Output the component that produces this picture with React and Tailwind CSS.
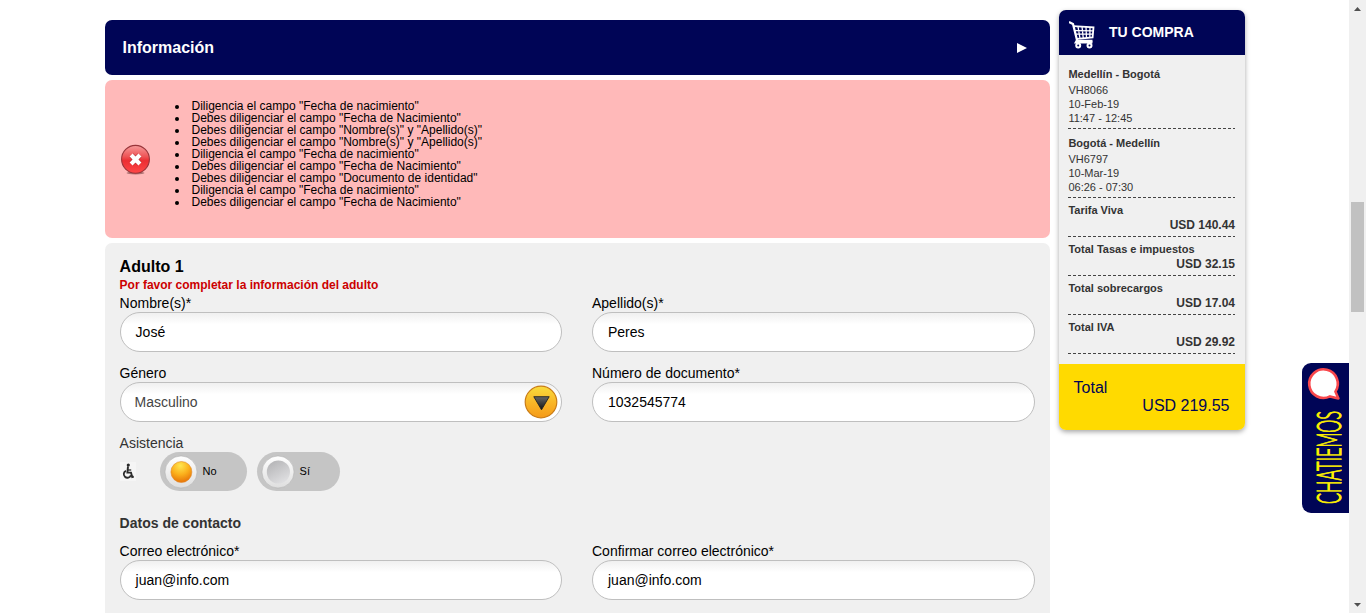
import React from "react";

const errors = [
  'Diligencia el campo "Fecha de nacimiento"',
  'Debes diligenciar el campo "Fecha de Nacimiento"',
  'Debes diligenciar el campo "Nombre(s)" y "Apellido(s)"',
  'Debes diligenciar el campo "Nombre(s)" y "Apellido(s)"',
  'Diligencia el campo "Fecha de nacimiento"',
  'Debes diligenciar el campo "Fecha de Nacimiento"',
  'Debes diligenciar el campo "Documento de identidad"',
  'Diligencia el campo "Fecha de nacimiento"',
  'Debes diligenciar el campo "Fecha de Nacimiento"',
];

const flights = [
  { route: "Medellín - Bogotá", code: "VH8066", date: "10-Feb-19", time: "11:47 - 12:45" },
  { route: "Bogotá - Medellín", code: "VH6797", date: "10-Mar-19", time: "06:26 - 07:30" },
];

const charges = [
  { label: "Tarifa Viva", value: "USD 140.44" },
  { label: "Total Tasas e impuestos", value: "USD 32.15" },
  { label: "Total sobrecargos", value: "USD 17.04" },
  { label: "Total IVA", value: "USD 29.92" },
];

function ErrorIcon() {
  return (
    <svg width="32" height="32" viewBox="0 0 32 32" className="mt-[2px] shrink-0">
      <defs>
        <linearGradient id="err" x1="0" y1="0" x2="0" y2="1">
          <stop offset="0" stopColor="#f79a9a" />
          <stop offset="0.4" stopColor="#ee5557" />
          <stop offset="0.55" stopColor="#ec2e32" />
          <stop offset="1" stopColor="#ff4848" />
        </linearGradient>
      </defs>
      <ellipse cx="16.5" cy="29" rx="9" ry="1.5" fill="#8a5555" opacity="0.7" />
      <circle cx="16.5" cy="15.3" r="13.9" fill="url(#err)" stroke="#98353a" strokeWidth="1.1" />
      <path d="M12.4 11.4l8.2 8.2M20.6 11.4l-8.2 8.2" stroke="#b02a2e" strokeWidth="5.2" />
      <path d="M12.1 11.1l8.8 8.8M20.9 11.1l-8.8 8.8" stroke="#fff" strokeWidth="4.2" />
    </svg>
  );
}

function CartIcon() {
  return (
    <svg width="26" height="28" viewBox="0 0 26 28" fill="none" stroke="#fff" className="shrink-0">
      <path d="M0 1L4 3L8.2 19.8H23.5" strokeWidth="2.2" />
      <path d="M4.5 5.2L24.5 6.3L23.6 16.5L8 17.8" strokeWidth="1.8" />
      <path d="M5.5 9.6L24.5 9.8M6.5 13.2L24 13.2M9 5.5L11 17.5M13 5.5L14.3 17.5M17 6L17.5 17M21 6L20.8 17" strokeWidth="1.3" />
      <path d="M8.2 18.5L6.5 21.5H23.5" strokeWidth="1.8" />
      <circle cx="9.2" cy="24.5" r="2" strokeWidth="2" />
      <circle cx="20.5" cy="24.5" r="2" strokeWidth="2" />
    </svg>
  );
}

function WheelchairIcon() {
  return (
    <svg width="16" height="19" viewBox="0 0 16 19" fill="none" stroke="#2a2a2a" className="shrink-0 bg-[#f5f5f5]">
      <circle cx="8.3" cy="3" r="1.6" fill="#2a2a2a" stroke="none" />
      <path d="M8 4.4L7.4 10.6H11L12.2 15L13.8 14.6" strokeWidth="1.9" />
      <path d="M7.6 8H11.2" strokeWidth="1.3" />
      <path d="M6 8.8A3.6 3.6 0 1 0 10.8 13.2" strokeWidth="1.8" />
    </svg>
  );
}

function DropIcon() {
  return (
    <svg width="34" height="34" viewBox="0 0 34 34" className="shrink-0">
      <defs>
        <linearGradient id="drop" x1="0" y1="0" x2="0" y2="1">
          <stop offset="0" stopColor="#f9dc3c" />
          <stop offset="0.5" stopColor="#f9b728" />
          <stop offset="1" stopColor="#f59a18" />
        </linearGradient>
        <linearGradient id="tri" x1="0" y1="0" x2="0" y2="1">
          <stop offset="0" stopColor="#666" />
          <stop offset="1" stopColor="#111" />
        </linearGradient>
      </defs>
      <circle cx="17" cy="17" r="15.8" fill="url(#drop)" stroke="#c97c17" strokeWidth="1.2" />
      <path d="M9.8 11.7H25.2L17.5 24.8Z" fill="url(#tri)" stroke="#222" strokeWidth="0.9" />
    </svg>
  );
}

function Knob({ on }) {
  return (
    <svg width="34" height="34" viewBox="0 0 34 34" className="shrink-0">
      <defs>
        <radialGradient id="amber" cx="0.45" cy="0.2" r="0.85">
          <stop offset="0" stopColor="#ffe650" />
          <stop offset="0.5" stopColor="#fbb01c" />
          <stop offset="1" stopColor="#e46b05" />
        </radialGradient>
        <linearGradient id="grey" x1="0.2" y1="0" x2="0.8" y2="1">
          <stop offset="0" stopColor="#b4b4b6" />
          <stop offset="1" stopColor="#e2e2e4" />
        </linearGradient>
        <linearGradient id="ring" x1="0" y1="0" x2="0" y2="1">
          <stop offset="0" stopColor="#ffffff" />
          <stop offset="1" stopColor="#dedede" />
        </linearGradient>
      </defs>
      <circle cx="17" cy="17" r="16.1" fill="url(#ring)" stroke="#b5b5b5" strokeWidth="0.7" />
      {on ? (
        <circle cx="17.4" cy="17" r="10.5" fill="url(#amber)" stroke="#e08a28" strokeWidth="0.6" />
      ) : (
        <circle cx="17.4" cy="17" r="11.6" fill="url(#grey)" />
      )}
    </svg>
  );
}

function Field({ label, value }) {
  return (
    <div>
      <div className="h-[18px] text-[14px] leading-[18px] text-black">{label}</div>
      <div className="flex h-10 items-center rounded-[20px] border border-[#bfbfbf] bg-linear-to-b from-[#f0f0f0] via-white via-30% to-white px-[15px] text-[14px] text-black">
        {value}
      </div>
    </div>
  );
}

function Arrow({ down }) {
  return (
    <svg width="17" height="17" viewBox="0 0 17 17">
      <path d={down ? "M5 7H12L8.5 10.8Z" : "M5 11H12L8.5 7Z"} fill="#505050" />
    </svg>
  );
}

function Dashes() {
  return (
    <svg width="167" height="1" className="mt-[3px] block">
      <path d="M0 0.5H167" stroke="#444" strokeWidth="1" strokeDasharray="3 2" />
    </svg>
  );
}

export default function App() {
  return (
    <div className="relative flex h-[613px] w-[1366px] overflow-hidden bg-white font-['Liberation_Sans',Arial,sans-serif]">
      <div className="flex flex-1 items-start pl-[105px]">
        <main className="w-[945px] pt-5">
          <header className="flex h-[55px] items-center justify-between rounded-[7px] bg-[#000556] pr-[23px] pl-[17.5px]">
            <h1 className="text-[16px] font-bold text-white">Información</h1>
            <svg width="10" height="10" viewBox="0 0 10 10">
              <path d="M0 0L10 5L0 10Z" fill="#fff" />
            </svg>
          </header>

          <section className="mt-[5px] flex h-[158px] items-center rounded-[7px] bg-[#ffb9b9] pl-[14px]">
            <ErrorIcon />
            <ul className="-mt-[11px] ml-6 text-[12px] leading-[12px] text-black">
              {errors.map((e, i) => (
                <li key={i} className="flex h-3 items-center">
                  <span className="mt-[3px] mr-[12.5px] size-1 rounded-full bg-black" />
                  {e}
                </li>
              ))}
            </ul>
          </section>

          <section className="mt-[5px] h-[380px] rounded-t-[7px] bg-[#f0f0f0] pt-[14px] pr-[15px] pl-[14.6px]">
            <h2 className="h-[19px] text-[16px] leading-5 font-bold text-black">Adulto 1</h2>
            <p className="h-[18px] text-[12px] leading-[18px] font-bold text-[#c00]">
              Por favor completar la información del adulto
            </p>
            <div className="grid grid-cols-[442px_443px] justify-between">
              <Field label="Nombre(s)*" value="José" />
              <Field label="Apellido(s)*" value="Peres" />
            </div>
            <div className="mt-3 grid grid-cols-[442px_443px] justify-between">
              <div>
                <div className="h-[18px] text-[14px] leading-[18px] text-black">Género</div>
                <div className="flex h-10 items-center justify-between rounded-[20px] border border-[#bfbfbf] bg-linear-to-b from-[#f0f0f0] via-white via-30% to-white pr-[2.4px] pl-[14px] text-[14px] text-[#444]">
                  Masculino
                  <DropIcon />
                </div>
              </div>
              <Field label="Número de documento*" value="1032545774" />
            </div>
            <div className="mt-3 h-[18px] text-[14px] leading-[18px] text-[#333]">Asistencia</div>
            <div className="flex h-[39px] items-center">
              <WheelchairIcon />
              <div className="ml-[24.4px] flex h-[39px] w-[87px] items-center gap-[4.6px] rounded-full bg-[#c5c5c5] pl-1 text-[11px] text-black">
                <Knob on />
                No
              </div>
              <div className="ml-[10px] flex h-[39px] w-[83px] items-center gap-[4.6px] rounded-full bg-[#c5c5c5] pl-1 text-[11px] text-black">
                <Knob />
                Sí
              </div>
            </div>
            <h3 className="mt-[23px] h-[18px] text-[14px] leading-[18px] font-bold text-[#333]">Datos de contacto</h3>
            <div className="mt-[10px] grid grid-cols-[442px_443px] justify-between">
              <Field label="Correo electrónico*" value="juan@info.com" />
              <Field label="Confirmar correo electrónico*" value="juan@info.com" />
            </div>
          </section>
        </main>

        <aside className="mt-[10px] ml-[9px] w-[186px] overflow-hidden rounded-[7px] bg-[#f0f0f0] text-[#333] shadow-[0_2px_5px_rgba(0,0,0,0.35)]">
          <div className="flex h-[45px] items-center bg-[#000556] pl-[10px]">
            <div className="pt-[4px]">
              <CartIcon />
            </div>
            <h2 className="ml-[14px] text-[14px] leading-[45px] font-bold text-white">TU COMPRA</h2>
          </div>
          <div className="h-[309px] pt-[10px] pr-[10px] pl-[9.4px]">
            {flights.map((f) => (
              <div key={f.code} className="h-[69px] text-[11px] leading-[14px]">
                <div className="h-[18px] leading-[18px] font-bold">{f.route}</div>
                <div>{f.code}</div>
                <div>{f.date}</div>
                <div>{f.time}</div>
                <Dashes />
              </div>
            ))}
            {charges.map((c) => (
              <div key={c.label} className="h-[39px]">
                <div className="h-[14px] text-[11px] leading-[14px] font-bold">{c.label}</div>
                <div className="h-[16px] text-right text-[12px] leading-[16px] font-bold">{c.value}</div>
                <Dashes />
              </div>
            ))}
          </div>
          <div className="h-[66px] bg-[#ffda00] pr-[15.5px] pl-[14.6px] pt-[15px] text-[16px] leading-[18px] text-[#000556]">
            <div>Total</div>
            <div className="text-right">USD 219.55</div>
          </div>
        </aside>
      </div>

      <div className="absolute top-[363px] left-[1302px] h-[150px] w-[47px] rounded-l-[9px] bg-[#000556]">
        <svg width="47" height="150" viewBox="0 0 47 150">
          <path d="M36.4 35.4L28 33.4A14.3 14.3 0 1 1 33.4 28.6Z" fill="#fff" stroke="#f9474c" strokeWidth="2.6" strokeLinejoin="round" />
          <text
            transform="translate(38.6 141) rotate(-90) scale(0.45 1)"
            textLength="207"
            lengthAdjust="spacingAndGlyphs"
            fontSize="34"
            fill="#fff200"
            stroke="#fff200"
            strokeWidth="1.1"
            className="font-['Lato','Liberation_Sans',sans-serif] font-light"
          >
            CHATIEMOS
          </text>
        </svg>
      </div>

      <div className="flex w-[17px] flex-col justify-between bg-[#f0f0f0]">
        <Arrow />
        <div className="flex flex-1 flex-col px-[2px] pt-[185px]">
          <div className="h-[110px] bg-[#c1c1c1]" />
        </div>
        <Arrow down />
      </div>
    </div>
  );
}
